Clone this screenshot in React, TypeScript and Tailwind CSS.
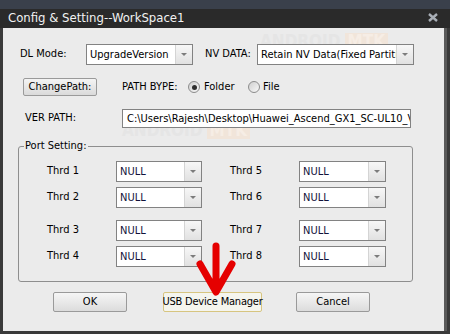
import React from 'react';

const ui = "font-['DejaVu_Sans_Condensed','Liberation_Sans',sans-serif] text-[11px] text-black";

const Combo: React.FC<{ value: string; w: string; navy?: boolean }> = ({ value, w, navy }) => (
  <div className={`flex h-[21px] border border-[#828282] bg-white ${w}`}>
    <div className={`flex-1 overflow-hidden whitespace-nowrap pl-[3px] leading-[19px] ${navy ? 'text-[#12123a]' : 'text-black'}`}>
      {value}
    </div>
    <div className="flex w-[17px] items-center justify-center border-l border-[#d4d4d4] bg-linear-to-b from-[#f7f7f7] to-[#e1e1e1]">
      <div className="h-0 w-0 border-x-[3px] border-t-[3px] border-x-transparent border-t-[#7c7c7c]" />
    </div>
  </div>
);

const Radio: React.FC<{ on?: boolean }> = ({ on }) => (
  <span className="flex h-[12px] w-[12px] items-center justify-center rounded-full border border-[#8c8c8c] bg-linear-to-br from-[#cfcfcf] to-[#f9f9f9]">
    {on && <span className="h-[5px] w-[5px] rounded-full bg-[#2e2e2e]" />}
  </span>
);

const Btn: React.FC<{ label: string; w: string; hot?: boolean }> = ({ label, w, hot }) => (
  <div
    className={`flex h-[20px] items-center justify-center whitespace-nowrap rounded-[2px] border ${w} ${
      hot ? 'border-[#d7c580] bg-[#f5f5ee] tracking-[-0.2px]' : 'border-[#9a9a9a] bg-linear-to-b from-[#f6f6f6] to-[#dcdcdc]'
    }`}
  >
    {label}
  </div>
);

const ThrdRow: React.FC<{ a: number; b: number; className?: string }> = ({ a, b, className }) => (
  <div className={`flex h-[21px] items-center pl-[28px] ${className ?? ''}`}>
    <span className="w-[69px]">Thrd {a}</span>
    <Combo value="NULL" w="w-[86px]" navy />
    <span className="ml-[28px] w-[69px]">Thrd {b}</span>
    <Combo value="NULL" w="w-[87px]" navy />
  </div>
);

export default function App() {
  return (
    <div className={`relative flex h-[334px] w-[450px] flex-col bg-[#3a3a3a] ${ui}`}>
      <div className="h-[9px] bg-[#3a404b]" />
      <div className="flex h-[19px] items-center justify-between bg-[#2a2a2a] pb-[2px] pl-[8px] pr-[12px]">
        <span className="text-[13px] text-[#f2f2f2]">Config &amp; Setting--WorkSpace1</span>
        <svg width="10" height="9" viewBox="0 0 10 9">
          <path d="M1 1 L9 8 M9 1 L1 8" stroke="#a9afb7" strokeWidth="2.4" />
        </svg>
      </div>

      <div className="flex flex-1 pb-[3px] pl-[3px]">
        <div className="relative flex-1 bg-[#ebebeb]">
          {/* faint watermark */}
          <div className="absolute left-[257px] top-[5px] flex items-center gap-[4px] text-[17px] font-bold leading-none">
            <span className="text-[#e5e5e5]">ANDROID</span>
            <span className="bg-[#f1e5da] px-[3px] text-[#f6ede5]">MTK</span>
          </div>
          <div className="absolute left-[119px] top-[94px] flex items-center gap-[4px] text-[17px] font-bold leading-none">
            <span className="text-[#e5e5e5]">ANDROID</span>
            <span className="bg-[#f1e5da] px-[3px] text-[#f6ede5]">MTK</span>
          </div>

          <div className="relative flex flex-col">
            <div className="mt-[16px] flex items-center pl-[17px]">
              <span className="w-[66px]">DL Mode:</span>
              <Combo value="UpgradeVersion" w="w-[107px]" />
              <span className="ml-[12px] w-[52px]">NV DATA:</span>
              <Combo value="Retain NV Data(Fixed Partition)" w="w-[157px]" />
            </div>

            <div className="mt-[13px] flex h-[18px] items-center pl-[20px]">
              <div className="flex h-[18px] w-[74px] items-center justify-center rounded-[2px] border border-[#9a9a9a] bg-linear-to-b from-[#f4f4f4] to-[#dadada]">
                ChangePath:
              </div>
              <span className="ml-[25px] w-[66px]">PATH BYPE:</span>
              <Radio on />
              <span className="ml-[4px] w-[44px]">Folder</span>
              <Radio />
              <span className="ml-[3px]">File</span>
            </div>

            <div className="mt-[13px] flex items-center pl-[22px]">
              <span className="w-[97px]">VER PATH:</span>
              <div className="h-[19px] w-[289px] overflow-hidden whitespace-nowrap border border-[#828282] bg-white pl-[4px] leading-[17px]">
                C:\Users\Rajesh\Desktop\Huawei_Ascend_GX1_SC-UL10_V100R001C00B124\dload
              </div>
            </div>

            <fieldset className="ml-[15px] mt-[11px] w-[395px] rounded-[3px] border border-[#8e8e8e] pb-[14px]">
              <legend className="ml-[5px] px-[1px] leading-[14px]">Port Setting:</legend>
              <ThrdRow a={1} b={5} className="mt-[8px]" />
              <ThrdRow a={2} b={6} className="mt-[5px]" />
              <ThrdRow a={3} b={7} className="mt-[12px]" />
              <ThrdRow a={4} b={8} className="mt-[5px]" />
            </fieldset>

            <div className="mt-[10px] flex pl-[50px]">
              <Btn label="OK" w="w-[74px]" />
              <div className="ml-[36px]">
                <Btn label="USB Device Manager" w="w-[99px]" hot />
              </div>
              <div className="ml-[34px]">
                <Btn label="Cancel" w="w-[74px]" />
              </div>
            </div>
          </div>
        </div>
        <div className="w-[3px] bg-[#5a5a5a]" />
        <div className="w-[3px] bg-[#3a3a3a]" />
      </div>

      {/* red annotation arrow */}
      <svg className="pointer-events-none absolute left-0 top-0" width="450" height="334">
        <path
          d="M216 246 L216 290 M200 264 L216 292 L232 264"
          stroke="#e50000"
          strokeWidth="7"
          strokeLinecap="round"
          strokeLinejoin="round"
          fill="none"
        />
      </svg>
    </div>
  );
}
